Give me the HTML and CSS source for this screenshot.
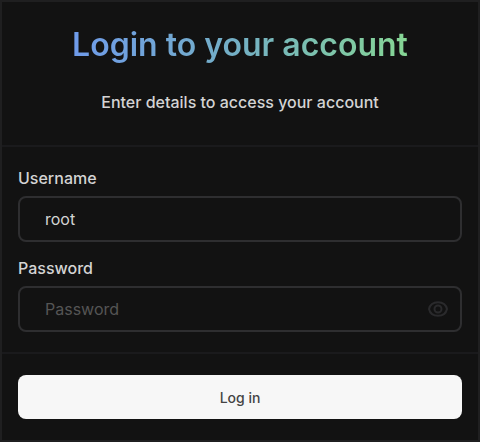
FILE: index.html
```html
<!DOCTYPE html>
<html lang="en">
<head>
    <meta charset="UTF-8">
    <meta name="viewport" content="width=device-width, initial-scale=1.0">
    <title>Login</title>
    <link rel="stylesheet" href="styles.css">
</head>
<body>
    <form class="card">
        <!-- Title -->
        <header class="card-header">
            <h1>Login to your account</h1>
            <p>Enter details to access your account</p>
        </header>

        <!-- Fields -->
        <div class="card-body">
            <label for="username">Username</label>
            <div class="field">
                <input type="text" id="username" name="username" value="root">
            </div>
            <label for="password">Password</label>
            <div class="field">
                <input type="password" id="password" name="password" placeholder="Password">
                <button type="button" class="toggle" aria-label="Show password">
                    <svg width="20" height="20" viewBox="0 0 20 20" fill="none" stroke="currentColor" stroke-width="2">
                        <path d="M1 10c1-4.500 4.500-6.800 9-6.800s8 2.300 9 6.800c-1 4.500-4.500 6.800-9 6.800S2 14.500 1 10z"/>
                        <circle cx="10" cy="10" r="3.500"/>
                    </svg>
                </button>
            </div>
        </div>

        <!-- Submit -->
        <footer class="card-footer">
            <button type="submit" class="submit">Log in</button>
        </footer>
    </form>
</body>
</html>
```
FILE: styles.css
```css
* {
    box-sizing: border-box;
}

body {
    margin: 0;
    background-color: #121212;
    color: #d4d4d4;
    font-family: Inter, "Liberation Sans", sans-serif;
    font-size: 16px;
}

/* Card */
.card {
    border: 2px solid #1f1f20;
}

.card-header {
    padding: 21px 16px 31px;
    border-bottom: 2px solid #1a1a1c;
    text-align: center;
}

h1 {
    width: fit-content;
    margin: 0 auto;
    font-size: 32px;
    line-height: 44px;
    font-weight: 600;
    color: transparent;
    background-image: linear-gradient(to right, #6f9bea, #74b0c4, #86d694);
    background-clip: text;
    -webkit-background-clip: text;
}

.card-header p {
    margin: 23px 0 0;
    line-height: 24px;
    font-weight: 500;
}

/* Fields */
.card-body {
    padding: 21px 16px 20px;
    border-bottom: 2px solid #1a1a1c;
}

label {
    display: block;
    margin-bottom: 8px;
    line-height: 20px;
    font-weight: 500;
}

.field {
    display: flex;
    align-items: center;
    height: 46px;
    margin-bottom: 16px;
    padding: 0 12px 0 25px;
    border: 2px solid #2e2e30;
    border-radius: 8px;
}

.field:last-child {
    margin-bottom: 0;
}

.field input {
    flex: 1;
    min-width: 0;
    padding: 0;
    border: none;
    outline: none;
    background: none;
    color: #d4d4d4;
    font: inherit;
}

.field input::placeholder {
    color: #555;
}

.toggle {
    display: flex;
    padding: 0;
    border: none;
    background: none;
    color: #2a2a2c;
    cursor: pointer;
}

/* Submit button */
.card-footer {
    padding: 21px 16px;
}

.submit {
    display: block;
    width: 100%;
    height: 44px;
    border: none;
    border-radius: 8px;
    background-color: #f7f7f7;
    color: #444;
    font: inherit;
    font-size: 14px;
    font-weight: 500;
    cursor: pointer;
}

.submit:hover {
    background-color: #fff;
}
```
